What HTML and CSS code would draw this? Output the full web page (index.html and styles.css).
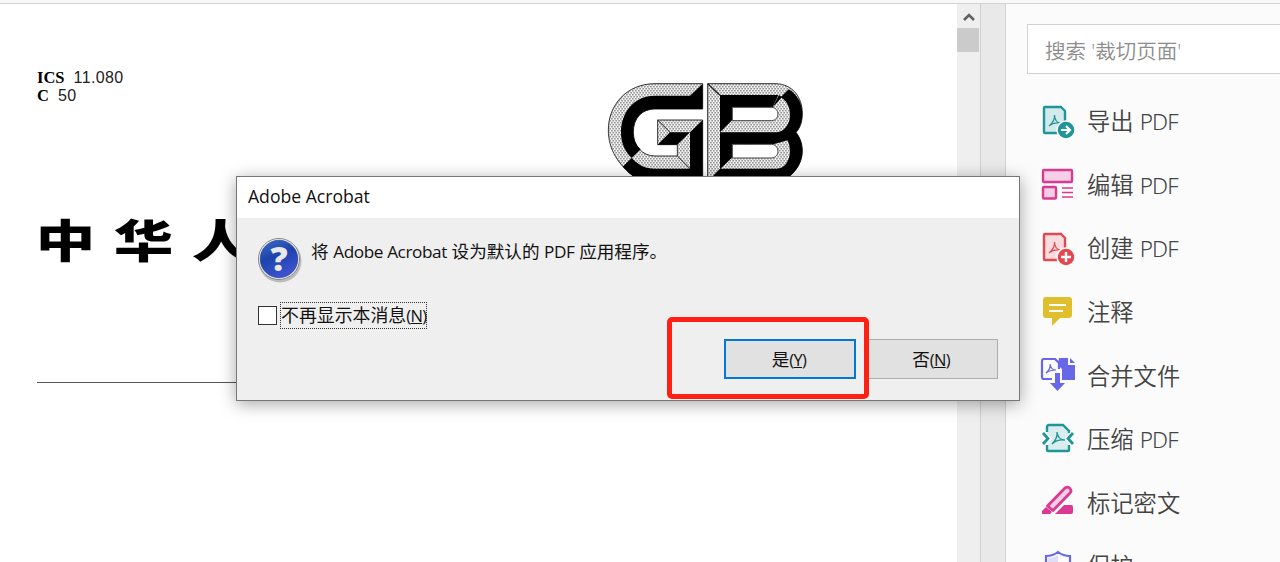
FILE: index.html
```
<!DOCTYPE html>
<html lang="zh-CN">
<head>
  <meta charset="UTF-8">
  <meta name="viewport" content="width=device-width, initial-scale=1.0">
  <title>Adobe Acrobat</title>
  <link rel="stylesheet" href="styles.css">
</head>
<body>
<div class="topbar"></div>
<div class="main">
  <div class="document">
    <div class="doc-head">
      <div class="doc-codes">
        <div><b>ICS</b><span>11.080</span></div>
        <div><b>C</b><span>50</span></div>
      </div>
      <svg class="gb-logo" viewBox="51 39 588 288">
        <defs>
          <pattern id="dots" width="9" height="12" patternUnits="userSpaceOnUse">
            <rect width="9" height="12" fill="#f4f2f4"/>
            <rect x="0" y="1" width="5" height="3" fill="#666"/>
            <rect x="4" y="7" width="5" height="3" fill="#666"/>
          </pattern>
        </defs>
        <g fill="url(#dots)" stroke="#333" stroke-width="3">
          <path d="M338 41H195C110 41 55 105 55 180C55 238 85 285 135 322H338V150H203V224H262V258H195C155 258 130 225 130 187C130 145 155 117 195 117H338Z"/>
          <path d="M353 41H555C610 41 637 85 637 130C637 155 630 175 618 187C632 205 637 225 637 243C637 275 620 305 590 322H353Z"/>
        </g>
        <path d="M338 41L300 77H195C130 77 93 130 93 187C93 220 105 245 125 264L152 238C137 225 130 207 130 187C130 145 155 117 195 117H338Z"/>
        <path d="M98 290L125 264C145 285 165 296 195 296H300V187L338 150V327H140Q115 310 98 290Z"/>
        <path d="M203 224L240 187H300L262 224Z"/>
        <path d="M203 150L240 187M262 258L300 296" stroke="#222" stroke-width="3"/>
        <path d="M596 58C625 75 637 105 637 130C637 155 630 175 618 187C632 205 637 225 637 243C637 275 620 305 590 327H360L390 296H560C585 296 600 270 600 243Q600 226 593 211L553 222H427V262L390 298V75H565L548 112H427V150L390 187H560C585 185 600 160 600 135C600 110 590 92 572 82L596 58Z"/>
        <path d="M548 112L567 75L576 82Z"/>
        <g fill="#fff" stroke="#444" stroke-width="3">
          <path d="M427 112H545C570 114 570 150 545 152H427Z"/>
          <path d="M427 223H545C570 225 570 262 545 264H427Z"/>
        </g>
        <path d="M353 41L390 76" stroke="#222" stroke-width="4"/>
      </svg>
    </div>
    <div class="doc-title"><span>中</span><span>华</span><span>人</span></div>
    <div class="doc-rule"></div>
  </div>
  <div class="scrollbar">
    <svg class="scroll-up" viewBox="0 0 12 10"><path d="M1 8L6 3L11 8" fill="none" stroke="#606060" stroke-width="2.6"/></svg>
    <div class="scroll-thumb"></div>
  </div>
  <div class="splitter"></div>
  <div class="sidebar">
    <div class="search">搜索 '裁切页面'</div>
    <div class="tools">
      <div class="tool">
        <svg class="icon" viewBox="0 0 36 36" fill="none" stroke="#1f9599" stroke-width="2.4">
          <path d="M22 3H5Q4 3 4 4V28Q4 29 5 29H25V7L21 3Z" fill="#d3e9ea"/>
          <path d="M9 22Q15 17 14.500 11Q15 19 21 19Q13 18 9 22Z" stroke-width="1.200"/>
          <circle cx="26" cy="26" r="9" fill="#1f9599" stroke="#fbfbfb" stroke-width="1.500"/>
          <path d="M21 26H29M26 22L30 26L26 30" stroke="#fff" stroke-width="2.200"/>
        </svg>
        <span>导出 <em>PDF</em></span>
      </div>
      <div class="tool">
        <svg class="icon" viewBox="0 0 36 36" fill="#f5cfe5" stroke="#dc3a92" stroke-width="2.4">
          <rect x="3" y="3" width="29" height="12" rx="1"/>
          <rect x="3" y="20" width="13" height="11.500" rx="1"/>
          <path d="M22 21H33M22 25.500H33M22 30H33" stroke-width="1.500"/>
        </svg>
        <span>编辑 <em>PDF</em></span>
      </div>
      <div class="tool">
        <svg class="icon" viewBox="0 0 36 36" fill="none" stroke="#e34850" stroke-width="2.4">
          <path d="M22 3H5Q4 3 4 4V28Q4 29 5 29H25V7L21 3Z" fill="#f8dcdf"/>
          <path d="M9 22Q15 17 14.500 11Q15 19 21 19Q13 18 9 22Z" stroke-width="1.200"/>
          <circle cx="26" cy="26" r="9" fill="#e34850" stroke="#fbfbfb" stroke-width="1.500"/>
          <path d="M21 26H31M26 21V31" stroke="#fff" stroke-width="2.400"/>
        </svg>
        <span>创建 <em>PDF</em></span>
      </div>
      <div class="tool">
        <svg class="icon" viewBox="0 0 36 36">
          <path d="M6 2H29Q32 2 32 5V20Q32 23 29 23H20L12 31V23H6Q3 23 3 20V5Q3 2 6 2Z" fill="#dfbf2b"/>
          <path d="M9 10H26M9 16H23" stroke="#fff" stroke-width="2"/>
        </svg>
        <span>注释</span>
      </div>
      <div class="tool">
        <svg class="icon" viewBox="0 0 36 36">
          <path d="M19 0H28V7H35V22H22V11L18 7Z" fill="#6767e8"/>
          <path d="M30 0L35 5H30Z" fill="#6767e8"/>
          <path d="M12 21H4Q2 21 2 19V3Q2 1 4 1H15L19 5V11" fill="none" stroke="#6767e8" stroke-width="2.200"/>
          <path d="M6 15Q11 11 10 6Q11 12 16 12Q10 12 6 15Z" fill="none" stroke="#6767e8" stroke-width="1.200"/>
          <path d="M15 15H20V25H25L17.500 33L10 25H15Z" fill="#6767e8" stroke="#fbfbfb" stroke-width="1.500" paint-order="stroke"/>
        </svg>
        <span>合并文件</span>
      </div>
      <div class="tool">
        <svg class="icon" viewBox="0 0 36 36" fill="none" stroke="#1f9599" stroke-width="2.400">
          <path d="M7 10V5Q7 3 9 3H23L29 9V29H7V24L12 17Z" fill="#d9edee" stroke="none"/>
          <path d="M7 10V5Q7 3 9 3H23L29 9V11M7 23V28Q7 29 8 29H28Q29 29 29 28V23"/>
          <path d="M12 22Q18 16 17 10Q18 18 25 18Q17 17 12 22Z" stroke-width="1.400"/>
          <path d="M3 11L8 16.500L3 22M33 11L28 16.500L33 22" stroke="#fbfbfb" stroke-width="5"/>
          <path d="M3 11L8 16.500L3 22M33 11L28 16.500L33 22" stroke-width="2.800"/>
        </svg>
        <span>压缩 <em>PDF</em></span>
      </div>
      <div class="tool">
        <svg class="icon" viewBox="0 0 36 36">
          <path d="M15 29L24 20H31Q33 20 33 22V27Q33 29 31 29Z" fill="#dc3a92"/>
          <path d="M2 29V26L6 22L12 27L10 29Z" fill="#dc3a92"/>
          <path d="M7.500 21L25 3Q28 1 30 3.500Q32 6 30 8L13 25.500Z" fill="#f5cfe5" stroke="#dc3a92" stroke-width="2.800" stroke-linejoin="round"/>
        </svg>
        <span>标记密文</span>
      </div>
      <div class="tool">
        <svg class="icon" viewBox="0 0 36 36">
          <path d="M18 3Q23 7 30 7V18Q28 28 18 33Q8 28 6 18V7Q13 7 18 3Z" fill="#fbfbfb" stroke="#6767e8" stroke-width="2.200"/>
          <path d="M18 6V30Q10 26 8 18V9Q14 9 18 6Z" fill="#dedef8"/>
        </svg>
        <span>保护</span>
      </div>
    </div>
  </div>
</div>

<div class="dialog">
  <div class="dialog-title">Adobe Acrobat</div>
  <div class="dialog-body">
    <div class="message">
      <svg class="question" viewBox="0 0 46 46">
        <defs>
          <linearGradient id="blue" x1="0" y1="0" x2="0.400" y2="1">
            <stop offset="0" stop-color="#3e6cc9"/>
            <stop offset="0.500" stop-color="#1d43ac"/>
            <stop offset="1" stop-color="#3d52cf"/>
          </linearGradient>
        </defs>
        <circle cx="23" cy="24" r="21.500" fill="#bbb"/>
        <circle cx="22" cy="22" r="20.500" fill="#f4f4f4" stroke="#888"/>
        <circle cx="22" cy="22" r="18.800" fill="url(#blue)" stroke="#173d8d" stroke-width="0.600"/>
        <text x="22" y="34" text-anchor="middle">?</text>
      </svg>
      <p>将 <em>Adobe Acrobat</em> 设为默认的 <em>PDF</em> 应用程序。</p>
    </div>
    <label class="dont-show"><i class="checkbox"></i><span>不再显示本消息<small>(<u>N</u>)</small></span></label>
    <div class="buttons">
      <button class="button primary">是<small>(<u>Y</u>)</small></button>
      <button class="button">否<small>(<u>N</u>)</small></button>
    </div>
  </div>
</div>
<div class="highlight"></div>
</body>
</html>
```
FILE: styles.css
```
html, body {
  margin: 0;
  height: 100%;
  overflow: hidden;
  background-color: #fff;
  font-family: "Open Sans", "Noto Sans CJK SC", sans-serif;
}
body {
  display: flex;
  flex-direction: column;
}
em {
  font-style: normal;
}
.topbar {
  height: 3px;
  flex-shrink: 0;
  background-color: #f8f8f8;
  border-bottom: 1px solid #d2d2d2;
}
.main {
  display: flex;
  flex: 1;
  min-height: 0;
}
.document {
  width: 957px;
  flex-shrink: 0;
}
.doc-head {
  display: flex;
  justify-content: space-between;
  padding: 65px 154px 0 37px;
}
.doc-codes {
  font-family: "Liberation Sans", sans-serif;
  font-size: 16px;
  line-height: 18px;
  color: #222;
}
.doc-codes b {
  font-family: "Liberation Serif", serif;
  font-size: 16.5px;
  margin-right: 9px;
  color: #000;
}
.doc-codes span {
  letter-spacing: 0.4px;
}
.gb-logo {
  width: 196px;
  height: 96px;
  margin-top: 14px;
}
.doc-title {
  display: flex;
  gap: 33px;
  margin: 37px 0 0 43px;
  font-size: 45px;
  line-height: 50px;
  font-weight: 900;
}
.doc-title span {
  transform: scaleX(1.32);
}
.doc-rule {
  margin: 116px 0 0 37px;
  width: 880px;
  height: 1px;
  background-color: #555;
}
.scrollbar {
  width: 23px;
  flex-shrink: 0;
  background-color: #efefef;
  border-right: 1px solid #d0d0d0;
}
.scroll-up {
  display: block;
  width: 12px;
  height: 10px;
  padding: 8px 6px 6px;
}
.scroll-thumb {
  width: 22px;
  height: 24px;
  background-color: #cbcbcb;
}
.splitter {
  width: 24px;
  flex-shrink: 0;
  background-color: #e9e9e9;
  border-right: 1px solid #d2d2d2;
}
.sidebar {
  flex: 1;
  min-width: 0;
  overflow: hidden;
  background-color: #fbfbfb;
}
.search {
  width: 260px;
  height: 48px;
  margin: 20px 0 0 21px;
  padding-left: 17px;
  border: 1px solid #d2d2d2;
  background-color: #fff;
  font-size: 20.5px;
  font-weight: 350;
  line-height: 52px;
  color: #8c8c8c;
}
.tools {
  margin: 16px 0 0 34px;
}
.tool {
  display: flex;
  align-items: center;
  height: 63.6px;
  font-size: 23.3px;
  font-weight: 350;
  color: #444;
}
.tool span {
  padding-bottom: 3px;
}
.tool em {
  font-family: "Noto Sans", "Open Sans", sans-serif;
  font-size: 22.5px;
  letter-spacing: -0.8px;
}
.icon {
  width: 36px;
  height: 36px;
  margin-right: 11px;
}

/* dialog on top of the document */
.dialog {
  position: absolute;
  left: 236px;
  top: 176px;
  width: 782px;
  height: 223px;
  border: 1px solid #777;
  background-color: #efefef;
  box-shadow: 0 3px 16px rgba(0, 0, 0, 0.35);
  color: #111;
}
.dialog-title {
  height: 41px;
  padding-left: 11px;
  background-color: #fff;
  font-size: 17.6px;
  line-height: 39px;
}
.dialog-body {
  padding: 19px 21px 0 21px;
}
.message {
  display: flex;
  height: 46px;
}
.question {
  width: 46px;
  height: 46px;
  margin-left: -1px;
  overflow: visible;
}
.question text {
  font-family: "Open Sans", sans-serif;
  font-size: 34px;
  font-weight: 800;
  fill: #e8e8e8;
}
.message p {
  margin: 0 0 0 8px;
  font-size: 17.6px;
  line-height: 28px;
}
.message em {
  font-size: 17.2px;
  letter-spacing: -0.4px;
}
.dont-show {
  display: flex;
  align-items: center;
  height: 27px;
  margin-top: 19px;
  font-size: 17.9px;
}
.checkbox {
  width: 17px;
  height: 17px;
  border: 1px solid #333;
  background-color: #fff;
  margin-right: 3px;
}
.dont-show span {
  border: 1px dotted #333;
  line-height: 24px;
}
small {
  font-size: 16.5px;
  letter-spacing: -0.7px;
}
.buttons {
  display: flex;
  justify-content: flex-end;
  gap: 10px;
  margin-top: 10px;
}
.button {
  width: 132px;
  height: 40px;
  padding: 0 2px 2px 0;
  border: 1px solid #adadad;
  background-color: #e1e1e1;
  font-family: inherit;
  font-size: 17.6px;
  color: #111;
}
.button.primary {
  border: 2px solid #0078d7;
}
.highlight {
  position: absolute;
  left: 667px;
  top: 317px;
  width: 192px;
  height: 72px;
  border: 5px solid #ff2015;
  border-radius: 5px;
}
```
